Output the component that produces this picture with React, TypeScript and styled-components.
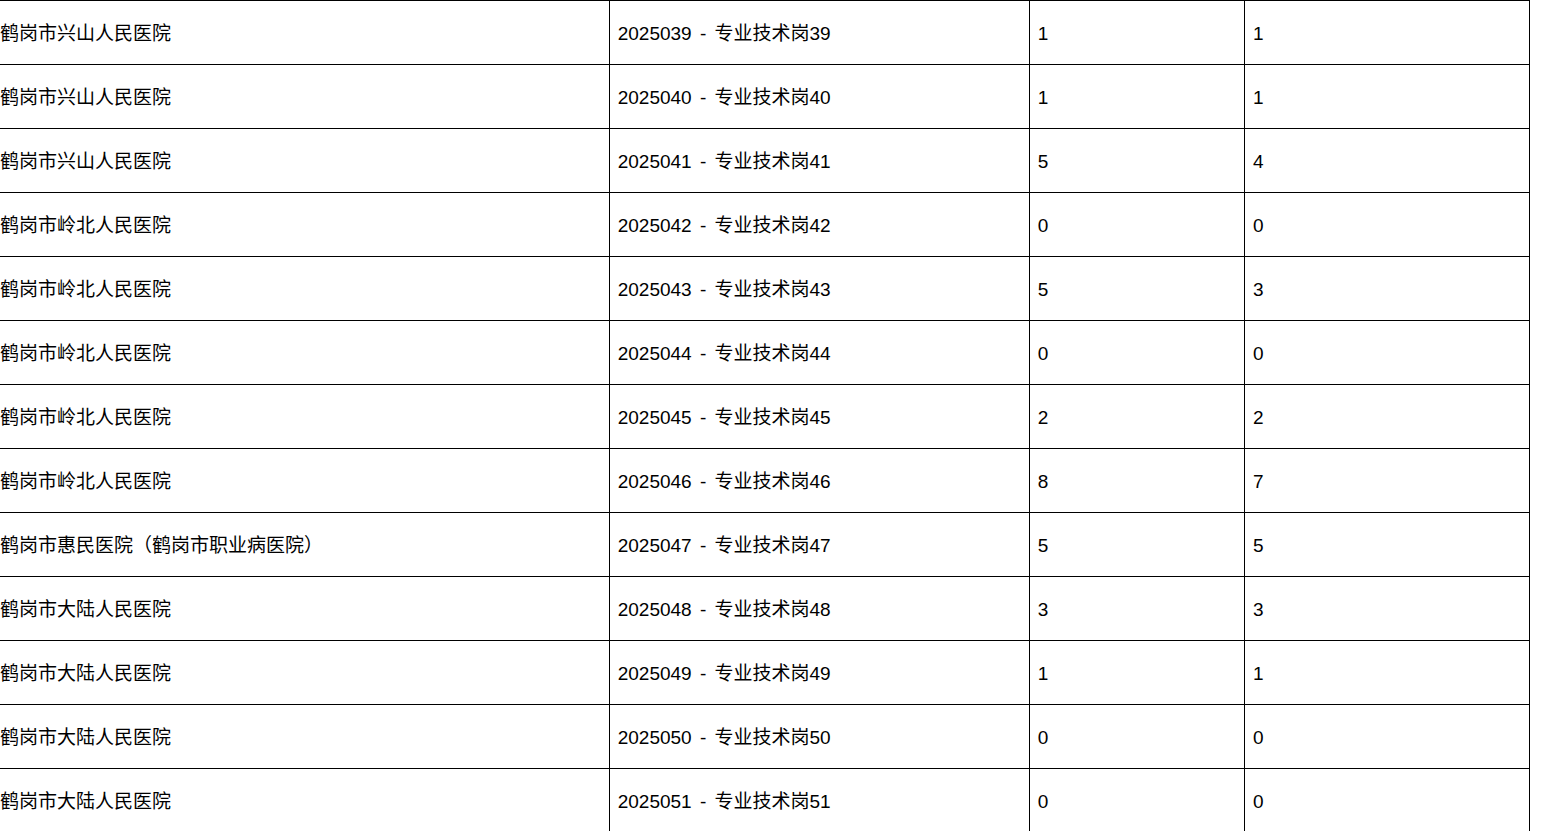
import React from "react";
import styled, { createGlobalStyle } from "styled-components";

const GlobalStyle = createGlobalStyle`
  html, body {
    margin: 0;
    padding: 0;
    background: #fff;
    overflow: hidden;
  }
`;

const Table = styled.table`
  border-collapse: collapse;
  table-layout: fixed;
  width: 1530px;
  font-family: "Liberation Sans", "Noto Sans CJK SC", sans-serif;
  font-size: 19px;
  line-height: 24px;
  color: #000;
`;

const Col = styled.col<{ $w: number }>`
  width: ${(p) => p.$w}px;
`;

const Cell = styled.td<{ $first?: boolean }>`
  height: 64px;
  box-sizing: border-box;
  padding: 2px 0 0 ${(p) => (p.$first ? "0" : "8px")};
  border: 1px solid #000;
  border-left: ${(p) => (p.$first ? "none" : "1px solid #000")};
  vertical-align: middle;
  white-space: nowrap;
`;

const Text = styled.div`
  height: 24px;
  line-height: 24px;
  overflow: visible;
`;

const Dash = styled.span`
  padding: 0 3px;
`;

interface Row {
  unit: string;
  code: number;
  plan: number;
  count: number;
}

const XS = "鹤岗市兴山人民医院";
const LB = "鹤岗市岭北人民医院";
const DL = "鹤岗市大陆人民医院";

const rows: Row[] = [
  { unit: XS, code: 39, plan: 1, count: 1 },
  { unit: XS, code: 40, plan: 1, count: 1 },
  { unit: XS, code: 41, plan: 5, count: 4 },
  { unit: LB, code: 42, plan: 0, count: 0 },
  { unit: LB, code: 43, plan: 5, count: 3 },
  { unit: LB, code: 44, plan: 0, count: 0 },
  { unit: LB, code: 45, plan: 2, count: 2 },
  { unit: LB, code: 46, plan: 8, count: 7 },
  { unit: "鹤岗市惠民医院（鹤岗市职业病医院）", code: 47, plan: 5, count: 5 },
  { unit: DL, code: 48, plan: 3, count: 3 },
  { unit: DL, code: 49, plan: 1, count: 1 },
  { unit: DL, code: 50, plan: 0, count: 0 },
  { unit: DL, code: 51, plan: 0, count: 0 },
];

export default function App() {
  return (
    <>
      <GlobalStyle />
      <Table>
        <colgroup>
          <Col $w={609} />
          <Col $w={420} />
          <Col $w={215} />
          <Col $w={285} />
        </colgroup>
        <tbody>
          {rows.map((r) => (
            <tr key={r.code}>
              <Cell $first>
                <Text>{r.unit}</Text>
              </Cell>
              <Cell>
                <Text>
                  {`20250${r.code} `}
                  <Dash>-</Dash>
                  {` 专业技术岗${r.code}`}
                </Text>
              </Cell>
              <Cell>
                <Text>{r.plan}</Text>
              </Cell>
              <Cell>
                <Text>{r.count}</Text>
              </Cell>
            </tr>
          ))}
        </tbody>
      </Table>
    </>
  );
}
